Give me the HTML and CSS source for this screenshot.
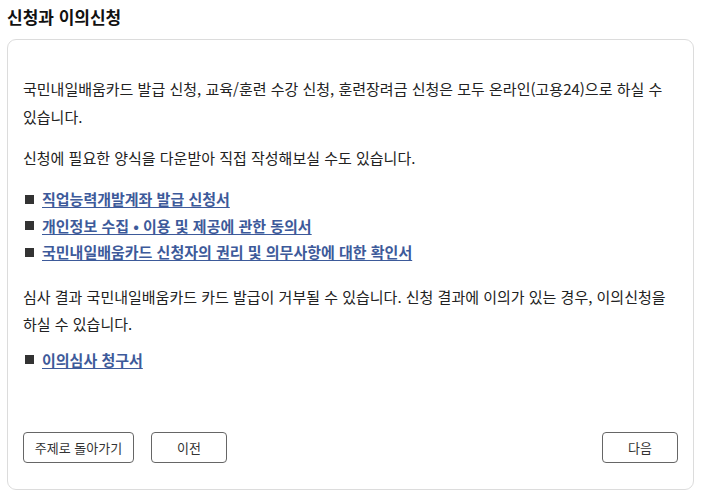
FILE: index.html
```html
<!DOCTYPE html>
<html lang="ko">
<head>
<meta charset="utf-8">
<link rel="stylesheet" href="styles.css">
</head>
<body>
<h2 class="title">신청과 이의신청</h2>
<div class="card">
  <p class="para">국민내일배움카드 발급 신청, 교육/훈련 수강 신청, 훈련장려금 신청은 모두 온라인(고용24)으로 하실 수 있습니다.</p>
  <p class="para p2">신청에 필요한 양식을 다운받아 직접 작성해보실 수도 있습니다.</p>
  <ul class="links">
    <li><a href="#">직업능력개발계좌 발급 신청서</a></li>
    <li><a href="#">개인정보 수집 • 이용 및 제공에 관한 동의서</a></li>
    <li><a href="#">국민내일배움카드 신청자의 권리 및 의무사항에 대한 확인서</a></li>
  </ul>
  <p class="para p3">심사 결과 국민내일배움카드 카드 발급이 거부될 수 있습니다. 신청 결과에 이의가 있는 경우, 이의신청을 하실 수 있습니다.</p>
  <ul class="links l2">
    <li><a href="#">이의심사 청구서</a></li>
  </ul>
  <div class="actions">
    <div class="left">
      <button class="btn btn-wide">주제로 돌아가기</button>
      <button class="btn">이전</button>
    </div>
    <button class="btn">다음</button>
  </div>
</div>
</body>
</html>
```
FILE: styles.css
```css
* { box-sizing: border-box; }
body {
  margin: 0;
  padding: 0 11px 0 7px;
  font-family: "Noto Sans CJK KR", "Noto Sans", sans-serif;
  color: #222;
  background: #fff;
}
.title {
  margin: 0;
  padding-top: 6px;
  height: 39px;
  font-size: 17px;
  font-weight: 700;
  line-height: 22px;
  color: #111;
}
.card {
  border: 1px solid #dcdcdc;
  border-radius: 9px;
  padding: 35px 15px 23px 15px;
  height: 451px;
}
.para {
  margin: 0;
  font-size: 15px;
  line-height: 28px;
  color: #222;
  word-break: keep-all;
}
.p2 { margin-top: 13px; }
.links {
  list-style: none;
  margin: 14px 0 0 0;
  padding: 0;
}
.links li {
  font-size: 15px;
  line-height: 26.5px;
  display: flex;
  align-items: center;
}
.links li::before {
  content: "";
  width: 9px;
  height: 9px;
  background: #333;
  margin: 0 8px 0 2px;
}
.links a {
  color: #3d5a9a;
  font-weight: 700;
  text-decoration: underline;
  text-underline-offset: 2px;
}
.p3 { margin-top: 17px; line-height: 27px; }
.l2 { margin-top: 10px; }
.actions {
  display: flex;
  justify-content: space-between;
  margin-top: 59px;
}
.left { display: flex; gap: 17px; }
.btn {
  height: 31px;
  width: 76px;
  border: 1px solid #666;
  border-radius: 4px;
  background: #fff;
  font-family: "Noto Sans CJK KR", sans-serif;
  font-size: 13px;
  color: #333;
  padding: 0;
}
.btn-wide { width: 111px; }
```
